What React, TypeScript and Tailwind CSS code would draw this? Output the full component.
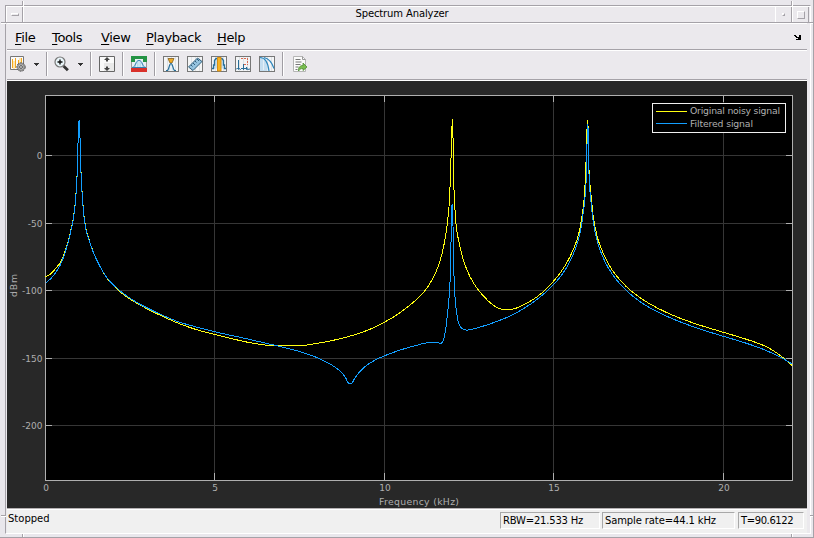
import type { ReactNode } from 'react';

const MENUS = [
  { label: 'File', className: 'w-[37px]' },
  { label: 'Tools', className: 'w-[49px]' },
  { label: 'View', className: 'w-[45px]' },
  { label: 'Playback', className: 'w-[71px]' },
  { label: 'Help', className: 'w-[30px]' },
];

const X_TICKS = [0, 5, 10, 15, 20];
const Y_TICKS = [0, -50, -100, -150, -200];

const xPos = (khz: number) => Math.round(45 + khz * 33.88) + 0.5;
const yPos = (dbm: number) => Math.round(155.2 - dbm * 1.35) + 0.5;

const ORIGINAL =
  '45.5,276.7 50,274.3 55,269.3 59.3,264 61.5,260.5 63.5,256 65.7,249 68.7,239.7 70.7,230.7 72.7,221.7 74.7,208 75.7,197.3 76.7,183 77.7,156 78.7,122 79.3,120 80.3,148 81.3,180 82.3,195 83.3,209 84.3,218 86.3,230 88.3,237 91.3,246.5 95.3,257 102,270 108.3,280 116.7,288.5 122.7,294 136,302.7 150,310.3 165,317.5 180,323.9 197,329.8 214,334.3 230,338.2 246,341.9 262,344.6 275,345.9 290,346 300,345.7 320,342.9 343.3,338 366.7,330.6 384.3,322.3 400,312.7 415,300.8 425,290.7 433.3,277.5 438.3,266 441.7,255 445,239.3 447.3,224 449.3,203 450.3,180 451.3,150 452.3,119 453.3,150 454,190 455.3,215 456.7,230 460,246.7 463.3,260 470,276.7 478.3,290 488.3,301 496.7,307.5 501.7,309.3 508,309.7 513.3,309 526.7,303.3 536.7,297 543.3,291.7 553.3,281.500 563.3,268.500 570,256.7 576.7,240.7 580,228.3 582,216 584,200 585,185 586.3,155 587.4,120 588.3,130 589,169.3 590.3,188.3 591.7,201.7 593.3,217.3 595.7,230 598.7,241.7 603.3,253.3 608.3,263.8 616.7,276 626.7,287 640,297.7 656.7,307.7 676.7,316.9 700,325.2 723.3,332.3 743.3,338.3 763.3,345.3 773.3,350.7 785,359.3 792.3,365.7';

const FILTERED =
  '45.5,283.3 51.7,277.7 55.7,272.7 60,265.5 63.3,257.8 65.7,250.500 68.7,240.7 70.7,231.7 72.7,222.7 74.7,209 75.7,198.3 76.7,184 77.7,157 78.5,124 79.4,120 80.3,150 81.3,181 82.3,196 83.3,210 84.3,219 86.3,231 88.3,238 91.3,247 95.3,257 102,270 108.3,279.500 116.7,287.9 122.7,293 136,302 150,309.3 165,316.4 180,322.3 197,327.2 214,331.6 245,338.4 272,344.6 286,348 300,351.7 313.3,356.1 325,361.3 333.3,366 340,371 345,376.7 349,383.4 351.5,383.4 355,377.7 360,371.5 366.7,365.3 375,360.1 384.3,355.9 396.7,351.2 413.3,346.2 428.3,342.7 436,342.3 440.7,343.3 442.7,342 444,338.3 446,326.7 447.7,311.7 449.5,292 450.7,262 451.6,208 452.5,204 453.6,261.7 454.7,292.7 456.7,313.3 458.7,323.3 461.7,328.3 466.7,330.2 476.7,328 490,323.9 510,316 530,304.5 543.3,294.3 553.3,285 563.3,272.7 570,261.4 576.7,245 580,233 582,221.7 584,206.7 585,197.3 586,184 586.8,156.7 587.4,124 588.3,132 588.9,171.7 590,191.7 591.3,205 593.3,222 595.7,235 598.7,246.2 603.3,258 608.3,268 616.7,280 626.7,290.9 640,301.7 656.7,311.5 676.7,320.5 700,329 723.3,336.3 743.3,342.3 763.3,349.3 780,357 792.3,364';

// Monotone cubic through the samples, so the skirts stay round and the peaks don't overshoot
function smoothPath(samples: string) {
  const p = samples.split(' ').map((s) => s.split(',').map(Number));
  const slope = (i: number) => (p[i + 1][1] - p[i][1]) / (p[i + 1][0] - p[i][0]);
  const tangent = p.map((_, i) => {
    if (i === 0) return slope(0);
    if (i === p.length - 1) return slope(i - 1);
    const a = slope(i - 1);
    const b = slope(i);
    return a * b <= 0 ? 0 : (2 * a * b) / (a + b);
  });
  let d = `M${p[0][0]} ${p[0][1]}`;
  for (let i = 1; i < p.length; i++) {
    const [x0, y0] = p[i - 1];
    const [x1, y1] = p[i];
    const h = (x1 - x0) / 3;
    d += `C${x0 + h} ${y0 + h * tangent[i - 1]} ${x1 - h} ${y1 - h * tangent[i]} ${x1} ${y1}`;
  }
  return d;
}

function Icon({ children, className = '' }: { children: ReactNode; className?: string }) {
  return (
    <svg viewBox="0 0 16 16" className={`block h-4 w-4 shrink-0 ${className}`} fill="none">
      {children}
    </svg>
  );
}

// White tile with the gray outline shared by most toolbar icons
function Tile() {
  return (
    <>
      <rect x=".5" y=".5" width="15" height="15" fill="#f4f5f6" stroke="#777" />
      <path d="M4.5 1v14M8.5 1v14M12.5 1v14" stroke="#dfe3e6" />
    </>
  );
}

function Separator({ className = '' }: { className?: string }) {
  return <div className={`h-6 w-[2px] shrink-0 border-l border-r border-l-[#a09da3] border-r-white ${className}`} />;
}

function Caret({ className = '' }: { className?: string }) {
  return (
    <svg viewBox="0 0 5 3" className={`block h-[3px] w-[5px] shrink-0 ${className}`} shapeRendering="crispEdges">
      <path d="M0 0h5v1H4v1H3v1H2V2H1V1H0z" fill="#333" />
    </svg>
  );
}

function TitleBar() {
  return (
    <div className="flex h-[17px] shrink-0 border-t border-b border-t-white border-b-[#a5a2a8]">
      <div className="flex w-[17px] items-center justify-center border-r border-l border-l-white border-r-[#a5a2a8]">
        <div className="h-[3px] w-2 border-t border-l border-r border-b border-t-white border-l-white border-r-[#a5a2a8] border-b-[#a5a2a8]" />
      </div>
      <div className="flex-1 border-l border-white text-center text-[10px] leading-[14px] tracking-[-0.12px]">
        <span className="pl-[5px]">Spectrum Analyzer</span>
      </div>
      <div className="flex w-[17px] items-center justify-center border-l border-r border-l-white border-r-[#a5a2a8]">
        <div className="h-[3px] w-[3px] border-t border-l border-b border-r border-t-white border-l-white border-b-[#a5a2a8] border-r-[#a5a2a8]" />
      </div>
      <div className="flex w-[17px] items-center justify-center border-l border-r border-l-white border-r-[#a5a2a8]">
        <div className="h-2 w-2 border-t border-l border-b border-r border-t-white border-l-white border-b-[#a5a2a8] border-r-[#a5a2a8]" />
      </div>
      <div className="w-px" />
    </div>
  );
}

function MenuBar() {
  return (
    <div className="mr-[3px] ml-px flex h-[28px] shrink-0 items-start border-t border-b border-t-white border-b-white">
      <div className="flex h-[26px] w-full border-b border-[#a5a2a8] pl-2 text-[13px] leading-[28px] tracking-[-0.35px]">
        {MENUS.map((m) => (
          <span key={m.label} className={`shrink-0 whitespace-nowrap ${m.className}`}>
            <span className="underline decoration-1 underline-offset-2">{m.label[0]}</span>
            {m.label.slice(1)}
          </span>
        ))}
        <svg viewBox="0 0 7 5" className="mt-[11px] mr-[6px] ml-auto h-[5px] w-[7px]" shapeRendering="crispEdges">
          <path d="M0 0h2v1h1v1h2V0h2v5H2V4h2V3H2V2H1V1H0z" fill="#000" />
        </svg>
      </div>
    </div>
  );
}

function Toolbar() {
  return (
    <div className="mr-[3px] ml-px flex h-[30px] shrink-0 items-start border-b border-white">
      <div className="flex h-[29px] w-full items-center border-b border-[#a5a2a8] pb-[2px] pl-[3px]">
        {/* configuration */}
        <Icon>
          <path d="M.5.5h13v13H.5z" fill="#fafafa" stroke="#777" />
          <path d="M2.5 3v9M5.5 2v10M8.5 4v7M11.5 2v6" stroke="#f5a81c" />
          <path d="M4 5v8M10 2v6" stroke="#ffd36c" />
          <circle cx="11" cy="11" r="4.2" fill="#aaa" stroke="#555" strokeDasharray="2 1" />
          <circle cx="11" cy="11" r="3.3" fill="#bbb" stroke="#777" strokeWidth=".8" />
          <circle cx="11" cy="11" r="1.4" fill="#eee" stroke="#555" />
        </Icon>
        <Caret className="ml-2" />
        <Separator className="ml-[7px]" />
        {/* zoom */}
        <Icon className="ml-[6px]">
          <path d="m9.5 10 4.4 4.3" stroke="#333" strokeWidth="2.8" />
          <circle cx="6" cy="6" r="5" fill="#e9f5f9" stroke="#777" strokeWidth="1.2" />
          <path d="M6 3.5v5M3.5 6h5" stroke="#111" strokeWidth="1.4" />
        </Icon>
        <Caret className="ml-2" />
        <Separator className="ml-[7px]" />
        {/* autoscale */}
        <Icon className="ml-[7px]">
          <path d="M.5.5h15v15H.5z" fill="#fafafa" stroke="#666" />
          <path d="M5 7h10v8H5z" fill="#e9e9e9" />
          <path d="M8 1 5 4h2v1.500h2V4h2zM8 15l-3-3h2v-1.500h2V12h2z" fill="#444" />
        </Icon>
        <Separator className="ml-[7px]" />
        {/* spectral mask */}
        <Icon className="ml-[7px]">
          <path d="M0 0h16v16H0z" fill="#e8f0f4" />
          <path d="M0 0h16v6h-4V3H4v3H0z" fill="#249344" />
          <path d="M1 11.500c4 0 3-7 7-7s3 7 7 7z" fill="#b8dcef" stroke="#347fb1" />
          <path d="M8 5v6M5.500 8v3M10.500 8v3" stroke="#dceef6" />
          <path d="M0 12h16v4H0z" fill="#d9302b" />
          <path d="M.5 6v6M15.500 6v6" stroke="#999" />
        </Icon>
        <Separator className="ml-[7px]" />
        <div className="ml-[7px] flex gap-2">
          <Icon>
            <Tile />
            <path d="M5 2.500h6L9 7H7z" fill="#edaa25" stroke="#856020" strokeWidth=".8" />
            <path d="M3 14.500h1.500c2-2 1.500-7 3.500-7s1.500 5 3.500 7H13" fill="#c5e1ef" stroke="#286d98" strokeWidth="1.2" />
            <path d="M8 10v5" stroke="#f4f5f6" strokeWidth="1.500" />
          </Icon>
          <Icon>
            <Tile />
            <path d="m1.500 11 9-9L15 5.500l-9 9z" fill="#95c3df" stroke="#315f7c" />
            <path d="m4 9 1.500 1.500M6 7l2 2M8 5l1.500 1.500M10 3l2 2" stroke="#315f7c" />
          </Icon>
          <Icon>
            <Tile />
            <path d="M1 12.500h1.500V9h1V4.500L5 2.500h6L12.500 4.500V9h1v3.500H15" fill="#c4deec" stroke="#286d98" strokeWidth="1.3" />
            <path d="M6.500 1.500h3.500V15H6.500z" fill="#f7b321" stroke="#d98e10" />
          </Icon>
          <Icon>
            <Tile />
            <path d="M1 13.500 2.500 12 3.500 13.500V4v8l2 1.500L7 12l1.500 1.500V8v5.500L10 12l1.500 1.500V11l1 2.500L15 13" stroke="#286d98" />
            <path d="M6 2.500h7M9 8.500h4" stroke="#d96a50" strokeDasharray="2 1" />
            <path d="M12.500 2v7" stroke="#d96a50" strokeDasharray="2 1" />
          </Icon>
          <Icon>
            <Tile />
            <path d="M1 1.500c6 0 7 5 8 13.500H1z" fill="#c5def0" />
            <path d="M4.500 2v12M8.500 8v7" stroke="#e4eff6" />
            <path d="M1 1.500c5 0 8 5 9 13.500M5 1.500c5 1 8 5 10 11" stroke="#2e87bd" strokeWidth="1.2" />
          </Icon>
        </div>
        <Separator className="ml-[7px] border-l-[#777579]" />
        {/* generate script */}
        <Icon className="ml-[8px]">
          <path d="M1.500.5h9l3 3v12h-12z" fill="#fbfbfb" stroke="#b5b5b5" />
          <path d="M10.500.5v3h3" stroke="#999" />
          <path d="M3.500 3.500h5M3.500 6h6M3.500 8.500h5M3.500 11h3M3.500 13.500h2" stroke="#777" />
          <path d="M6.500 15c-.5-4 2-5.500 4.500-5.500V7l4 4-4 3.500V12.500c-2 0-3 .5-4.500 2.500z" fill="#79bd4f" stroke="#4f8c35" strokeWidth=".8" />
        </Icon>
      </div>
    </div>
  );
}

function SpectrumPlot() {
  return (
    <svg viewBox="7 81 800 427" className="mr-[3px] ml-px block h-[427px] w-[800px] shrink-0 bg-[#282828]">
      <g shapeRendering="crispEdges" fill="none">
        <rect x="45.5" y="95.5" width="747" height="385" fill="#000" />
        {X_TICKS.slice(1).map((t) => (
          <path key={t} d={`M${xPos(t)} 96V480`} stroke="#363636" />
        ))}
        {Y_TICKS.map((t) => (
          <path key={t} d={`M46 ${yPos(t)}H792`} stroke="#363636" />
        ))}
        {X_TICKS.slice(1).map((t) => (
          <path key={t} d={`M${xPos(t)} 96v6M${xPos(t)} 473v7`} stroke="#afafaf" />
        ))}
        {Y_TICKS.map((t) => (
          <path key={t} d={`M46 ${yPos(t)}h6M786 ${yPos(t)}h6`} stroke="#afafaf" />
        ))}
        <rect x="45.5" y="95.5" width="747" height="385" stroke="#afafaf" />
        <path d={smoothPath(ORIGINAL)} stroke="#ffff11" />
        <path d={smoothPath(FILTERED)} stroke="#139fff" />
        <rect x="652.5" y="103.5" width="133" height="29" fill="#000" stroke="#f0f0f0" />
        <path d="M656 111.5h31" stroke="#ffff11" />
        <path d="M656 123.5h31" stroke="#139fff" />
      </g>
      <g fill="#afafaf" fontSize="9.3" className="[font-family:'DejaVu_Sans',sans-serif]">
        <text x="690" y="114" textLength="90">Original noisy signal</text>
        <text x="690" y="127" textLength="63">Filtered signal</text>
        {X_TICKS.map((t) => (
          <text key={t} x={xPos(t) + 0.5} y="491" fontSize="9" textAnchor="middle">{t}</text>
        ))}
        {Y_TICKS.map((t) => (
          <text key={t} x="42.5" y={yPos(t) + 3} fontSize="9" textAnchor="end">{t}</text>
        ))}
        <text x="419" y="504.5" textAnchor="middle" textLength="80">Frequency (kHz)</text>
        <text transform="translate(17 285.5) rotate(-90)" textAnchor="middle" textLength="23">dBm</text>
      </g>
    </svg>
  );
}

function StatusBar() {
  const cell = 'h-[17px] border-t border-l border-b border-r border-t-[#a8a8a8] border-l-[#a8a8a8] border-b-white border-r-white pl-[2px] leading-[15px] whitespace-nowrap';
  return (
    <div className="mr-[3px] ml-px flex h-[25px] shrink-0 border-t border-[#b5b1b3] bg-[#f0f0f0] text-[10px]">
      <div className="flex flex-1 border-t border-white pt-[2px]">
        <span className="ml-[1px] flex-1 leading-[13px]">Stopped</span>
        <div className={`mr-[2px] w-[100px] tracking-[-0.2px] ${cell}`}>RBW=21.533 Hz</div>
        <div className={`mr-[3px] w-[133px] tracking-[-0.12px] ${cell}`}>Sample rate=44.1 kHz</div>
        <div className={`mr-[3px] w-[66px] tracking-[-0.4px] ${cell}`}>T=90.6122</div>
      </div>
    </div>
  );
}

// Resize grips: a gray/white notch across the window frame
function FrameNotches() {
  return (
    <>
      <div className="absolute top-px left-[22px] h-[5px] w-[2px] border-r border-l border-r-white border-l-[#a5a2a8]" />
      <div className="absolute top-px left-[791px] h-[5px] w-[2px] border-r border-l border-r-white border-l-[#a5a2a8]" />
      <div className="absolute top-[22px] left-px h-[2px] w-[5px] border-t border-b border-t-[#a5a2a8] border-b-white" />
      <div className="absolute top-[22px] left-[810px] h-[2px] w-1 border-t border-b border-t-[#a5a2a8] border-b-white" />
      <div className="absolute top-[515px] left-px h-[2px] w-[5px] border-t border-b border-t-[#a5a2a8] border-b-white" />
      <div className="absolute top-[515px] left-[810px] h-[2px] w-1 border-t border-b border-t-[#a5a2a8] border-b-white" />
      <div className="absolute top-[534px] left-[22px] h-1 w-[2px] border-r border-l border-r-white border-l-[#a5a2a8]" />
      <div className="absolute top-[534px] left-[791px] h-1 w-[2px] border-r border-l border-r-white border-l-[#a5a2a8]" />
    </>
  );
}

export default function App() {
  return (
    <div className="relative h-[538px] w-[814px] overflow-hidden border-r border-b border-[#a5a2a8] bg-[#e9e7ec] pt-[5px] pr-[2px] pb-[3px] pl-[5px] text-black [font-family:'DejaVu_Sans',sans-serif]">
      <div className="flex h-[529px] w-[806px] flex-col border-t border-r border-b border-l border-t-[#a5a2a8] border-r-white border-b-white border-l-[#a5a2a8] bg-[#ebe9ed]">
        <TitleBar />
        <MenuBar />
        <Toolbar />
        <SpectrumPlot />
        <StatusBar />
      </div>
      <FrameNotches />
    </div>
  );
}
